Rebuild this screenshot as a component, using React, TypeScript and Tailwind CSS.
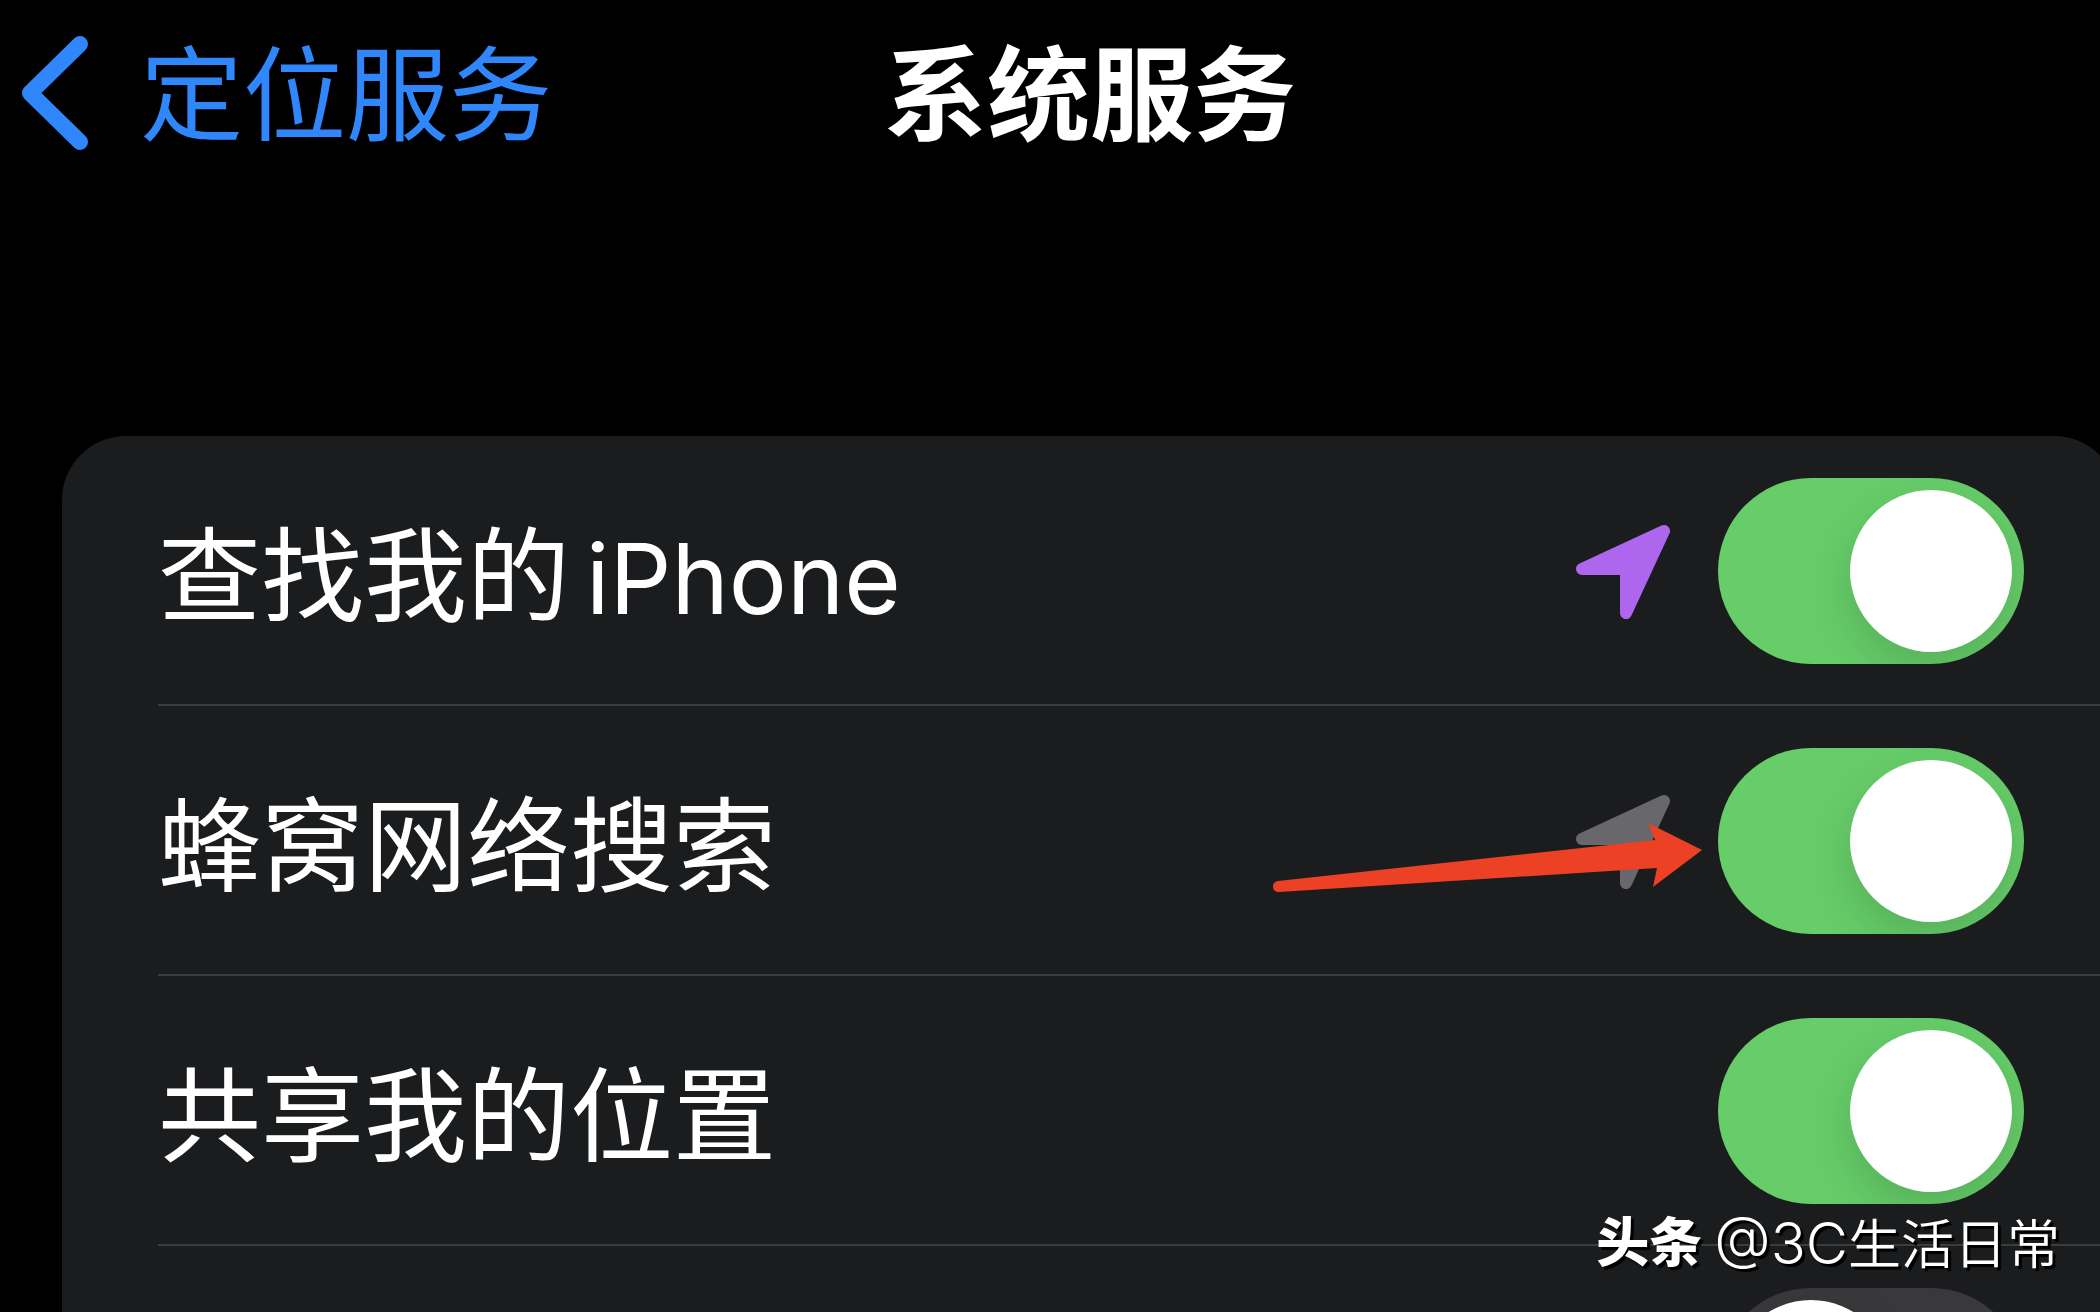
import { useState } from "react";

const initialServices = [
  { id: "find", label: "查找我的", latin: "iPhone", usage: "recent", on: true },
  { id: "cellular", label: "蜂窝网络搜索", usage: "past", on: true, pointed: true },
  { id: "share", label: "共享我的位置", on: true },
  { id: "more", on: false },
];

function BackChevron() {
  return (
    <svg viewBox="0 0 68 114" className="h-[114px] w-[68px]" fill="none" aria-hidden="true">
      <path
        d="M60 8 L10 57 L60 106"
        stroke="currentColor"
        strokeWidth="16"
        strokeLinecap="round"
        strokeLinejoin="round"
      />
    </svg>
  );
}

function LocationArrow({ usage }: { usage: string }) {
  return (
    <svg
      viewBox="0 -2 94 96"
      className={usage === "recent" ? "h-24 w-[94px] text-[#af66ee]" : "h-24 w-[94px] text-[#67676c]"}
      aria-hidden="true"
    >
      <path
        d="M6 44 L88 6 L50 88 V44 Z"
        fill="currentColor"
        stroke="currentColor"
        strokeWidth="12"
        strokeLinejoin="round"
      />
    </svg>
  );
}

function RedPointer() {
  return (
    <svg
      viewBox="0 0 432 72"
      className="absolute top-[74px] right-[321px] h-[72px] w-[432px]"
      aria-hidden="true"
    >
      <path
        d="M7 59 L384 18 L377 1 L431 28 L382 65 L386 46 L8 70 Q2 70 2 64 Q2 60 7 59 Z"
        fill="#ec4124"
      />
    </svg>
  );
}

export default function App() {
  const [services, setServices] = useState(initialServices);

  function toggle(id: string) {
    setServices(services.map((s) => (s.id === id ? { ...s, on: !s.on } : s)));
  }

  return (
    <div className="h-screen overflow-hidden bg-black font-['Inter','Noto_Sans_CJK_SC',sans-serif] text-white">
      <div className="w-[calc(100%+80px)]">
        <header className="grid h-[186px] grid-cols-[1fr_auto_1fr] items-center text-[103px] leading-none">
          <a href="#location" className="flex items-center gap-[52px] pl-5 text-[#2f87fb]">
            <BackChevron />
            <span className="pt-1">定位服务</span>
          </a>
          <h1 id="title" className="pt-1 font-bold">
            系统服务
          </h1>
        </header>

        <main className="mx-[62px] mt-[250px] rounded-[64px] bg-[#1b1c1e] pl-24">
          {services.map((s) => (
            <div
              key={s.id}
              className="flex h-[270px] items-center justify-end pr-[94px] shadow-[inset_0_-2px_#3b3c3e]"
            >
              {s.label && (
                <label
                  htmlFor={s.id}
                  className="mr-auto flex items-baseline gap-4 pt-2.5 text-[103px] leading-none"
                >
                  {s.label}
                  {s.latin && <span className="text-[97px]"> {s.latin}</span>}
                </label>
              )}
              <div className="relative flex items-center gap-12">
                {s.usage && <LocationArrow usage={s.usage} />}
                <input
                  id={s.id}
                  type="checkbox"
                  role="switch"
                  aria-labelledby={s.label ? undefined : "title"}
                  checked={s.on}
                  onChange={() => toggle(s.id)}
                  className="h-[186px] w-[306px] appearance-none overflow-hidden rounded-full bg-[#39393b] p-3 before:block before:size-[162px] before:rounded-full before:bg-white before:shadow-[0_18px_48px_rgba(0,0,0,0.15)] checked:bg-[#66cd69] checked:before:translate-x-[120px]"
                />
                {s.pointed && <RedPointer />}
              </div>
            </div>
          ))}
        </main>
      </div>

      <p className="fixed right-10 bottom-10 flex items-center gap-3 text-[53px] leading-none text-shadow-[3px_3px_1px_#000]">
        <span className="font-black">头条</span>
        <span className="font-[350]">
          <span className="text-[58px]">@3C</span>生活日常
        </span>
      </p>
    </div>
  );
}
